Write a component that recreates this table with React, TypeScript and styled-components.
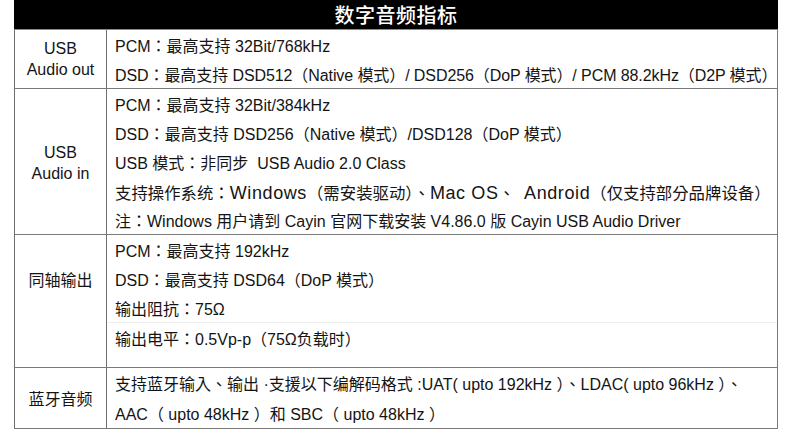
import styled, { createGlobalStyle } from 'styled-components';

const GlobalStyle = createGlobalStyle`
  body {
    margin: 0;
    background: #ffffff;
    font-family: 'Liberation Sans', 'Noto Sans CJK TC', sans-serif;
    color: #141414;
  }
`;

const Table = styled.div`
  width: 764px;
  margin-left: 14px;
`;

const Header = styled.div`
  height: 29px;
  background: #000;
  border-bottom: 1px solid #8a8a8a;
  color: #fff;
  display: flex;
  align-items: center;
  justify-content: center;
  font-family: 'Noto Sans CJK SC', sans-serif;
  font-size: 20px;
  font-weight: 500;
  letter-spacing: 0.5px;
`;

const Section = styled.div`
  display: grid;
  grid-template-columns: 92px 1fr;
  border-left: 1px solid #6f6f6f;
  border-right: 1px solid #7a7a7a;
  border-bottom: 1px solid #7a7a7a;
`;

const Label = styled.div<{ $shift?: number }>`
  border-right: 1px solid #6f6f6f;
  display: flex;
  align-items: center;
  justify-content: center;
  text-align: center;
  font-size: 16px;
  line-height: 21px;
  padding-top: ${(p) => p.$shift ?? 0}px;
`;

const Cell = styled.div<{ $divider?: boolean; $extra?: number }>`
  padding-left: 8px;
  padding-bottom: ${(p) => p.$extra ?? 0}px;
  border-top: ${(p) => (p.$divider ? '1px solid #f0f0f0' : 'none')};
`;

const Line = styled.div<{ $h?: number; $size?: number; $ls?: number }>`
  box-sizing: border-box;
  height: ${(p) => p.$h ?? 29}px;
  padding-top: 5px;
  line-height: 24px;
  font-size: ${(p) => p.$size ?? 16}px;
  letter-spacing: ${(p) => p.$ls ?? 0}px;
  white-space: nowrap;
`;

const Wide = styled.span`
  font-size: 18px;
  letter-spacing: 0.6px;
`;

export default function App() {
  return (
    <>
      <GlobalStyle />
      <Table>
        <Header>数字音频指标</Header>

        <Section>
          <Label>
            USB
            <br />
            Audio out
          </Label>
          <Cell>
            <Line>PCM：最高支持 32Bit/768kHz</Line>
            <Line $ls={-0.09}>DSD：最高支持 DSD512（Native 模式）/ DSD256（DoP 模式）/ PCM 88.2kHz（D2P 模式）</Line>
          </Cell>
        </Section>

        <Section>
          <Label $shift={3}>
            USB
            <br />
            Audio in
          </Label>
          <Cell>
            <Line>PCM：最高支持 32Bit/384kHz</Line>
            <Line>DSD：最高支持 DSD256（Native 模式）/DSD128（DoP 模式）</Line>
            <Line>USB 模式：非同步&nbsp; USB Audio 2.0 Class</Line>
            <Line $size={16.4}>
              支持操作系统：<Wide>Windows</Wide>（需安装驱动）、<Wide>Mac OS</Wide>、&nbsp; <Wide>Android</Wide>（仅支持部分品牌设备）
            </Line>
            <Line>注：Windows 用户请到 Cayin 官网下载安装 V4.86.0 版 Cayin USB Audio Driver</Line>
          </Cell>
        </Section>

        <Section>
          <Label $shift={4}>同轴输出</Label>
          <Cell>
            <Line>PCM：最高支持 192kHz</Line>
            <Line>DSD：最高支持 DSD64（DoP 模式）</Line>
            <Line>输出阻抗：75Ω</Line>
          </Cell>
          <Label />
          <Cell $divider $extra={15}>
            <Line>输出电平：0.5Vp-p（75Ω负载时）</Line>
          </Cell>
        </Section>

        <Section>
          <Label $shift={3}>蓝牙音频</Label>
          <Cell>
            <Line $h={30}>支持蓝牙输入、输出 ·支援以下编解码格式 :UAT( upto 192kHz ）、LDAC( upto 96kHz ）、</Line>
            <Line $h={30}>AAC（ upto 48kHz ）和 SBC（ upto 48kHz ）</Line>
          </Cell>
        </Section>
      </Table>
    </>
  );
}
